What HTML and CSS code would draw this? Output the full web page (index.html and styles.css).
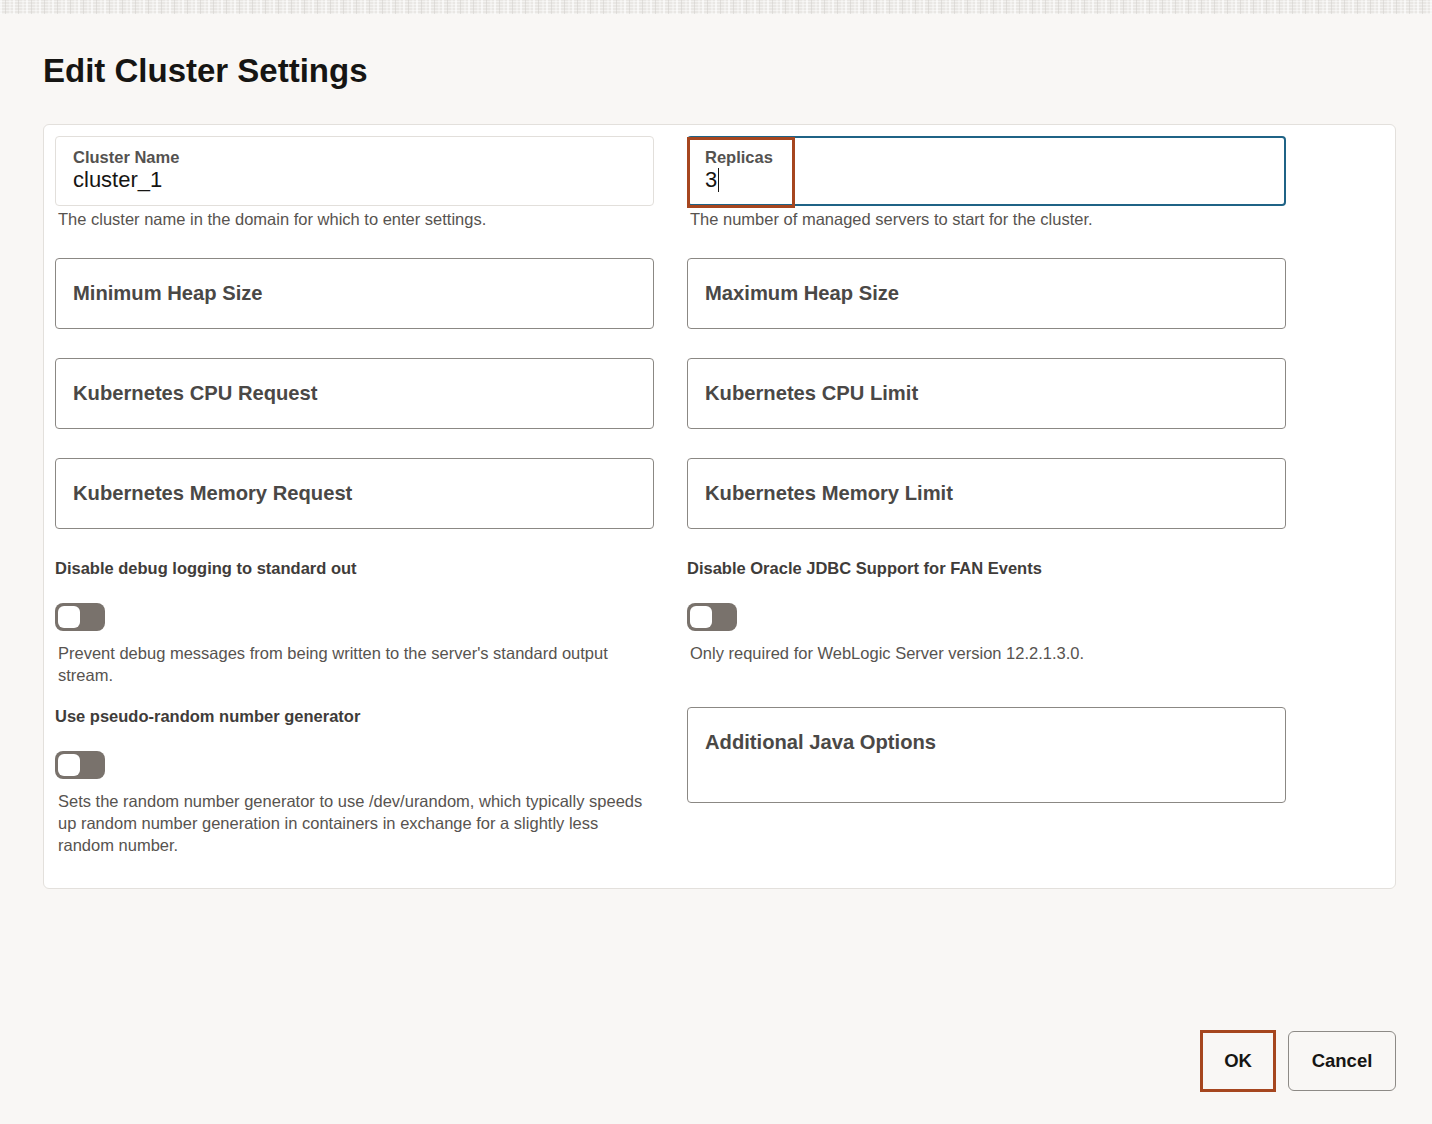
FILE: index.html
```html
<!DOCTYPE html>
<html lang="en">
<head>
<meta charset="utf-8">
<title>Edit Cluster Settings</title>
<link rel="stylesheet" href="styles.css">
</head>
<body>
<div class="topband"></div>
<div class="page">
  <h1 class="title">Edit Cluster Settings</h1>
  <div class="card">
    <div class="grid">
      <div class="cell cell-first">
        <div class="field field-readonly">
          <div class="field-label">Cluster Name</div>
          <div class="field-value">cluster_1</div>
        </div>
        <div class="helper">The cluster name in the domain for which to enter settings.</div>
      </div>
      <div class="cell cell-first">
        <div class="field field-focus">
          <div class="field-label">Replicas</div>
          <div class="field-value">3<span class="caret"></span></div>
          <div class="highlight highlight-replicas"></div>
        </div>
        <div class="helper">The number of managed servers to start for the cluster.</div>
      </div>

      <div class="cell cell-field"><div class="field field-empty"><span class="placeholder">Minimum Heap Size</span></div></div>
      <div class="cell cell-field"><div class="field field-empty"><span class="placeholder">Maximum Heap Size</span></div></div>

      <div class="cell cell-field"><div class="field field-empty"><span class="placeholder">Kubernetes CPU Request</span></div></div>
      <div class="cell cell-field"><div class="field field-empty"><span class="placeholder">Kubernetes CPU Limit</span></div></div>

      <div class="cell cell-field"><div class="field field-empty"><span class="placeholder">Kubernetes Memory Request</span></div></div>
      <div class="cell cell-field"><div class="field field-empty"><span class="placeholder">Kubernetes Memory Limit</span></div></div>

      <div class="cell cell-toggle">
        <div class="toggle-label">Disable debug logging to standard out</div>
        <div class="toggle"><span class="knob"></span></div>
        <div class="helper helper-toggle">Prevent debug messages from being written to the server's standard output stream.</div>
      </div>
      <div class="cell cell-toggle">
        <div class="toggle-label">Disable Oracle JDBC Support for FAN Events</div>
        <div class="toggle"><span class="knob"></span></div>
        <div class="helper helper-toggle">Only required for WebLogic Server version 12.2.1.3.0.</div>
      </div>

      <div class="cell cell-toggle">
        <div class="toggle-label">Use pseudo-random number generator</div>
        <div class="toggle"><span class="knob"></span></div>
        <div class="helper helper-toggle">Sets the random number generator to use /dev/urandom, which typically speeds up random number generation in containers in exchange for a slightly less random number.</div>
      </div>
      <div class="cell cell-java">
        <div class="field field-empty field-textarea"><span class="placeholder">Additional Java Options</span></div>
      </div>
    </div>
  </div>
  <div class="actions">
    <button class="btn btn-ok">OK<span class="highlight"></span></button>
    <button class="btn btn-cancel">Cancel</button>
  </div>
</div>
</body>
</html>
```

FILE: styles.css
```css
* { box-sizing: border-box; }
html, body { margin: 0; padding: 0; }
body {
  background: #f9f7f5;
  font-family: "Liberation Sans", Arial, sans-serif;
  color: #161513;
  min-height: 1124px;
  display: flex;
  flex-direction: column;
}
.topband {
  height: 14px;
  flex: none;
  background-color: #e9e7e4;
  background-image:
    repeating-linear-gradient(90deg, rgba(255,255,255,0.6) 0 2px, transparent 2px 5px, rgba(205,202,198,0.45) 5px 6px, transparent 6px 9px, rgba(255,255,255,0.35) 9px 11px, transparent 11px 13px),
    repeating-linear-gradient(0deg, rgba(255,255,255,0.45) 0 1px, transparent 1px 3px);
}
.page {
  flex: 1;
  display: flex;
  flex-direction: column;
  padding: 0 36px 32px 43px;
}
.title {
  font-weight: 700;
  font-size: 33px;
  line-height: 40px;
  margin: 37px 0 0 0;
  color: #161513;
}
.card {
  margin-top: 33px;
  background: #ffffff;
  border: 1px solid #e3e0dc;
  border-radius: 6px;
  padding: 11px 12px 32px 11px;
}
.grid {
  display: grid;
  grid-template-columns: 599px 599px;
  column-gap: 33px;
  row-gap: 20px;
}
.cell { position: relative; }
.cell-first { padding-bottom: 8px; }
.cell-field { padding-bottom: 9px; }
.cell-java { padding-top: 1px; }
.field {
  position: relative;
  height: 71px;
  border-radius: 4px;
  background: #fff;
}
.cell-first .field { height: 70px; }
.field-readonly {
  border: 1px solid #e2dfdb;
  padding: 10px 17px 0 17px;
}
.field-focus {
  border: 2px solid #1f6386;
  padding: 9px 16px 0 16px;
}
.field-label {
  font-size: 16.5px;
  line-height: 20px;
  font-weight: 700;
  color: #545250;
}
.field-value {
  font-size: 22px;
  line-height: 25px;
  color: #161513;
  display: flex;
  align-items: center;
}
.caret {
  display: inline-block;
  width: 1px;
  height: 24px;
  background: #161513;
  margin-left: 1px;
}
.highlight {
  position: absolute;
  border: 3px solid #a6461f;
  pointer-events: none;
}
.highlight-replicas {
  left: -2px;
  top: -1px;
  width: 108px;
  height: 71px;
}
.field-empty {
  border: 1px solid #8b8884;
  padding: 0 17px;
  display: flex;
  align-items: center;
}
.placeholder {
  font-size: 20.2px;
  font-weight: 700;
  color: #4a4846;
}
.field-textarea {
  height: 96px;
  align-items: flex-start;
  padding-top: 23px;
}
.helper {
  font-size: 16.5px;
  line-height: 22px;
  color: #57534f;
  padding: 2px 0 0 3px;
}
.helper-toggle {
  padding-top: 0;
  margin-top: 11px;
  padding-right: 4px;
}
.toggle-label {
  font-size: 16.5px;
  line-height: 20px;
  font-weight: 700;
  color: #3f3c3a;
}
.toggle {
  margin-top: 25px;
  width: 50px;
  height: 28px;
  border-radius: 8px;
  background: #79726c;
  position: relative;
}
.knob {
  position: absolute;
  left: 3px;
  top: 3px;
  width: 22px;
  height: 22px;
  border-radius: 6px;
  background: #fff;
}
.actions {
  margin-top: auto;
  display: flex;
  justify-content: flex-end;
  align-items: center;
  gap: 12px;
}
.btn {
  position: relative;
  height: 60px;
  padding: 0;
  background: #f9f7f5;
  border: 1px solid #8d8a86;
  border-radius: 6px;
  font-family: "Liberation Sans", Arial, sans-serif;
  font-weight: 700;
  font-size: 18.5px;
  color: #161513;
}
.btn-cancel { width: 108px; }
.btn-ok {
  width: 76px;
  height: 62px;
}
.btn-ok .highlight {
  left: -1px;
  top: -1px;
  right: -1px;
  bottom: -1px;
}
```
